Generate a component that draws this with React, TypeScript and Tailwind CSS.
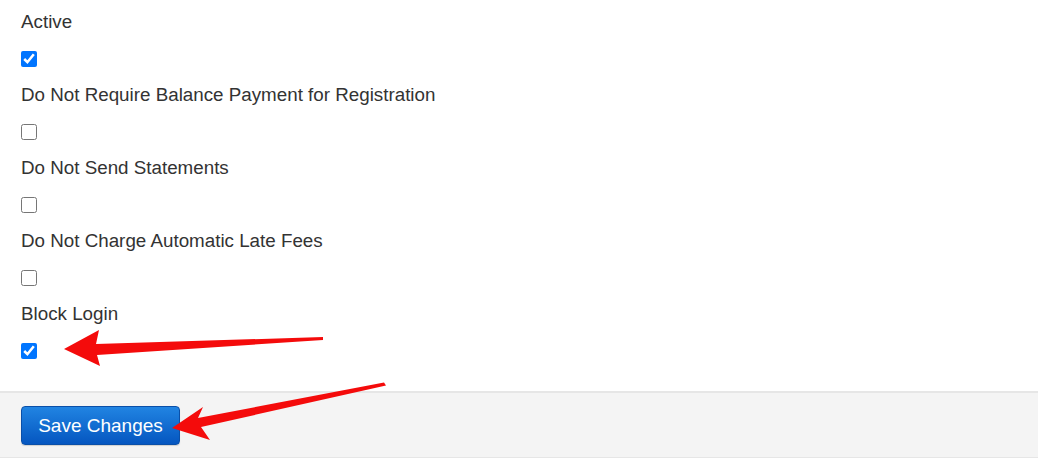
import React from 'react';

const fields = [
  { label: 'Active', checked: true },
  { label: 'Do Not Require Balance Payment for Registration', checked: false },
  { label: 'Do Not Send Statements', checked: false },
  { label: 'Do Not Charge Automatic Late Fees', checked: false },
  { label: 'Block Login', checked: true },
];

const Arrows: React.FC = () => (
  <svg className="absolute left-0 top-0 pointer-events-none" width="1038" height="461" viewBox="0 0 1038 461">
    <polygon
      fill="#f40b0b"
      points="64,349 99,330 96,344 323,337 323,340 97,355 100,366"
    />
    <polygon
      fill="#f40b0b"
      points="172,428 203,407 198,418 384,382.5 386,385.5 201,427 210,440"
    />
  </svg>
);

export default function App() {
  return (
    <div className="relative w-[1038px] h-[461px] bg-white text-[#333] text-[18.8px] font-['Liberation_Sans',Arial,sans-serif] overflow-hidden">
      <div className="pt-[10px] pb-[16px] px-[21px]">
        {fields.map((f) => (
          <div key={f.label} className="flex flex-col items-start mb-[16px]">
            <label className="leading-[24px]">{f.label}</label>
            <input
              type="checkbox"
              defaultChecked={f.checked}
              className="mt-[17px] mb-0 ml-0 mr-0 w-[16px] h-[16px] accent-[#0075ff]"
            />
          </div>
        ))}
      </div>
      <div className="h-[67px] bg-[#f4f4f4] border-t-2 border-b border-[#e6e6e6] pt-[13px] px-[21px]">
        <button className="w-[159px] h-[39px] rounded-[4px] text-white text-[19px] leading-none bg-gradient-to-b from-[#2184e2] to-[#0656c0] border border-[#0a4fa8] shadow-[0_1px_1px_rgba(0,0,0,0.15)]">
          Save Changes
        </button>
      </div>
      <Arrows />
    </div>
  );
}
